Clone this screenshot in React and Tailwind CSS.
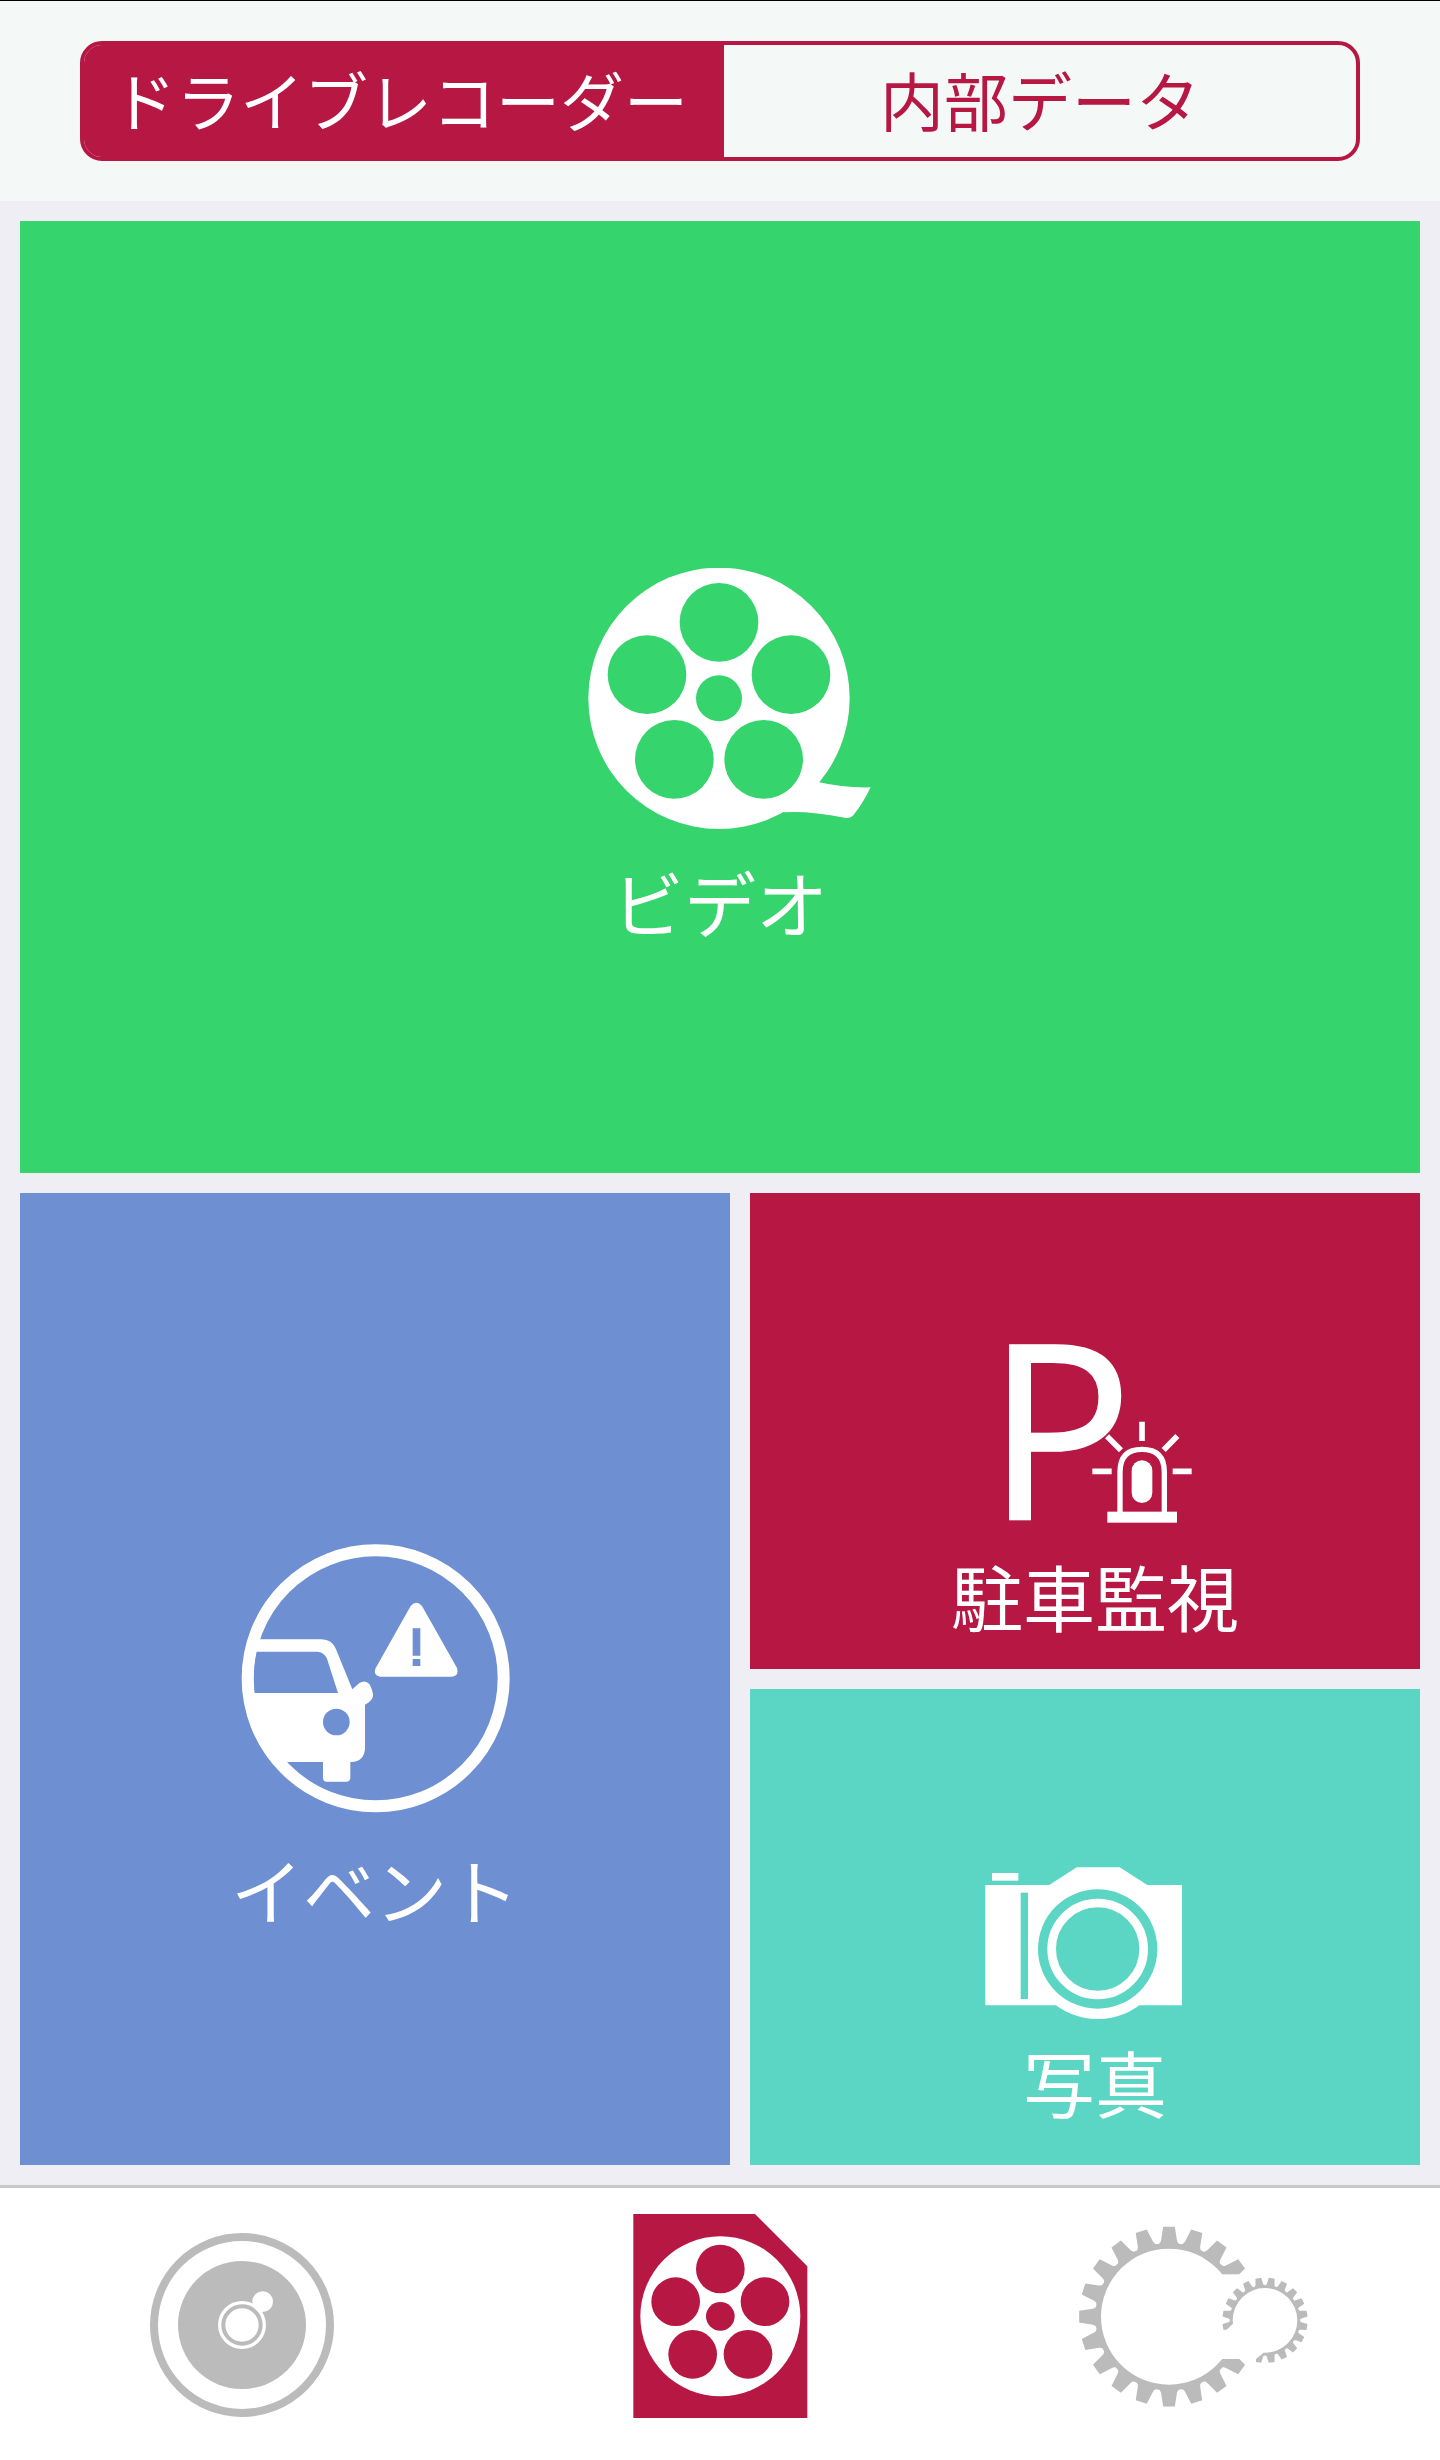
import React from 'react'

// Builds the closed outline of a cog wheel
const gearPath = ({ cx, cy, tip, root, inner, teeth, offset, tipHalf, baseHalf }) => {
  const step = 360 / teeth
  const at = (r, deg) => {
    const a = (deg * Math.PI) / 180
    return `${(cx + r * Math.sin(a)).toFixed(1)} ${(cy - r * Math.cos(a)).toFixed(1)}`
  }
  const shoulder = root + (tip - root) * 0.18
  let d = ''
  for (let i = 0; i < teeth; i++) {
    const mid = offset + i * step
    d += `${i === 0 ? 'M' : 'L'}${at(shoulder, mid - baseHalf)}`
    d += `L${at(tip, mid - tipHalf)}L${at(tip, mid + tipHalf)}L${at(shoulder, mid + baseHalf)}`
    d += `Q${at(root - 2, mid + baseHalf + 1)} ${at(root, mid + step / 2)}`
    d += `Q${at(root - 2, mid + step - baseHalf - 1)} ${at(shoulder, mid + step - baseHalf)}`
  }
  d += `ZM${cx - inner} ${cy}a${inner} ${inner} 0 1 0 ${inner * 2} 0a${inner} ${inner} 0 1 0 ${-inner * 2} 0Z`
  return d
}

const bigGear = gearPath({ cx: 357, cy: 380, tip: 270, root: 221, inner: 204, teeth: 20, offset: 0, tipHalf: 3.7, baseHalf: 6 })
const smallGear = gearPath({ cx: 645, cy: 391, tip: 128, root: 106, inner: 97, teeth: 20, offset: 9, tipHalf: 4, baseHalf: 6 })

const VideoIcon = () => (
  <svg className="w-[304px] h-[273px]" viewBox="24 84 912 819" aria-hidden="true">
    <circle cx="477" cy="475" r="392" fill="#fff" />
    <path d="M740 712L778 727Q850 744 932 742Q909 790 880 826Q872 836 855 833Q740 811 672 817L640 780Z" fill="#fff" />
    <g fill="#35d46d">
      <circle cx="477" cy="247" r="118" />
      <circle cx="261" cy="404" r="118" />
      <circle cx="693" cy="404" r="118" />
      <circle cx="343" cy="658" r="118" />
      <circle cx="611" cy="658" r="118" />
      <circle cx="477" cy="475" r="69" />
    </g>
  </svg>
)

const EventIcon = () => (
  <svg className="w-[270px] h-[283px] overflow-visible" viewBox="90 75 810 849" aria-hidden="true">
    <defs>
      <clipPath id="event-ring">
        <circle cx="497" cy="475" r="400" />
      </clipPath>
    </defs>
    <circle cx="497" cy="475" r="384" fill="none" stroke="#fff" strokeWidth="36" />
    <g clipPath="url(#event-ring)" fill="#fff">
      <path fillRule="evenodd" d="M90 358H335Q366 358 378 388L427 508L448 489Q466 478 478 492Q490 514 489 528Q488 542 465 554V686Q462 724 424 726H421V774Q420 785 409 785H350Q339 785 339 774V726H90ZM131 519H384L351 416Q342 396 322 395H137Q128 450 131 519Z" />
    </g>
    <circle cx="379" cy="606" r="40" fill="#6e8fd1" />
    <path d="M602 258Q619 238 636 258L741 444Q748 466 728 470H510Q490 466 496 446Z" fill="#fff" />
    <path d="M608 325H631V407H608ZM608 417H631V438H608Z" fill="#6e8fd1" />
  </svg>
)

const ParkingIcon = () => (
  <svg className="w-[230px] h-[193px] overflow-visible" viewBox="180 66 690 579" aria-hidden="true">
    <text x="198" y="601" fontSize="733" fill="#fff" stroke="#fff" strokeWidth="5" fontFamily="'Open Sans', sans-serif">P</text>
    <path d="M600 576V456Q600 388 666 388Q733 388 733 456V576" fill="#b61743" stroke="#fff" strokeWidth="16" />
    <rect x="635" y="421" width="62" height="128" rx="31" fill="#fff" />
    <rect x="562" y="575" width="209" height="33" fill="#fff" />
    <path d="M666 305V363M561 349L603 391M772 348L731 390M517 454H575M758 454H815" stroke="#fff" strokeWidth="17" fill="none" />
  </svg>
)

const CameraIcon = () => (
  <svg className="w-[230px] h-[173px]" viewBox="180 84 690 519" aria-hidden="true">
    <g fill="#fff">
      <rect x="216" y="159" width="79" height="23" />
      <path d="M196 195H388L470 142H599L682 195H786V556H196Z" />
      <circle cx="533" cy="387" r="210" />
    </g>
    <rect x="302" y="218" width="22" height="319" fill="#5cd6c4" />
    <circle cx="533" cy="387" r="179" fill="#5cd6c4" />
    <circle cx="533" cy="387" r="138" fill="none" stroke="#fff" strokeWidth="26" />
  </svg>
)

const CameraTabIcon = () => (
  <svg className="w-[260px] h-[272px]" viewBox="-30 84 780 816" aria-hidden="true">
    <circle cx="366" cy="495" r="264" fill="none" stroke="#bbb" strokeWidth="24" />
    <circle cx="366" cy="495" r="192" fill="#bbb" />
    <circle cx="428" cy="425" r="31" fill="#fff" />
    <circle cx="366" cy="495" r="72" fill="#fff" />
    <circle cx="366" cy="495" r="56" fill="none" stroke="#bbb" strokeWidth="12" />
  </svg>
)

const FilesTabIcon = () => (
  <svg className="w-[260px] h-[272px]" viewBox="-30 84 780 816" aria-hidden="true">
    <path d="M100 162H465L622 319V774H100Z" fill="#b61743" />
    <circle cx="361" cy="469" r="240" fill="#fff" />
    <g fill="#b61743">
      <circle cx="361" cy="327" r="73" />
      <circle cx="227" cy="425" r="73" />
      <circle cx="495" cy="425" r="73" />
      <circle cx="278" cy="583" r="73" />
      <circle cx="444" cy="583" r="73" />
      <circle cx="361" cy="469" r="43" />
    </g>
  </svg>
)

const SettingsTabIcon = () => (
  <svg className="w-[260px] h-[272px]" viewBox="60 -6 780 816" aria-hidden="true">
    <path d={bigGear} fill="#bbb" fillRule="evenodd" />
    <rect x="480" y="253" width="160" height="254" fill="#fff" />
    <path d={smallGear} fill="#bbb" fillRule="evenodd" />
    <path d="M505 420L530 419L548 402L620 440L641 488L618 507V520L590 516L575 506H505Z" fill="#fff" />
  </svg>
)

const tiles = [
  { label: 'ビデオ', icon: VideoIcon, className: 'col-span-2 bg-[#35d46d]' },
  { label: 'イベント', icon: EventIcon, className: 'row-span-2 bg-[#6e8fd1]' },
  { label: '駐車監視', icon: ParkingIcon, className: 'pl-5 bg-[#b61743]' },
  { label: '写真', icon: CameraIcon, className: 'pl-5 bg-[#5cd6c4]' },
]

const tabs = [
  { label: 'カメラ', icon: CameraTabIcon },
  { label: 'ファイル', icon: FilesTabIcon },
  { label: '設定', icon: SettingsTabIcon },
]

const App = () => {
  return (
    <div className="min-h-screen flex flex-col bg-[#eeeef4] font-['Noto_Sans_CJK_JP',sans-serif]">
      <header className="border-t border-black bg-[#f4f8f7] px-20 py-10">
        <div className="flex h-[120px] overflow-hidden rounded-[22px] border-4 border-[#b61743] text-[64px] leading-none">
          <button type="button" aria-pressed="true" className="flex-1 border-r-8 border-[#b61743] bg-[#b61743] pb-1.5 text-white whitespace-nowrap">
            ドライブレコーダー
          </button>
          <button type="button" aria-pressed="false" className="flex-1 pb-1.5 text-[#b61743] whitespace-nowrap">
            内部データ
          </button>
        </div>
      </header>

      {/* Media categories */}
      <main className="flex-1 grid grid-cols-[71fr_67fr] grid-rows-[2fr_1fr_1fr] gap-5 p-5">
        {tiles.map(({ label, icon: Icon, className }) => (
          <button
            key={label}
            type="button"
            className={`flex flex-col items-center justify-center gap-6 pt-[111px] text-[72px] leading-none text-white ${className}`}
          >
            <Icon />
            <span>{label}</span>
          </button>
        ))}
      </main>

      {/* Bottom navigation */}
      <nav className="grid grid-cols-3 border-t-3 border-[#c9c9cb] bg-white">
        {tabs.map(({ label, icon: Icon }) => (
          <a key={label} href="#" aria-label={label} className="flex justify-center">
            <Icon />
          </a>
        ))}
      </nav>
    </div>
  )
}

export default App
